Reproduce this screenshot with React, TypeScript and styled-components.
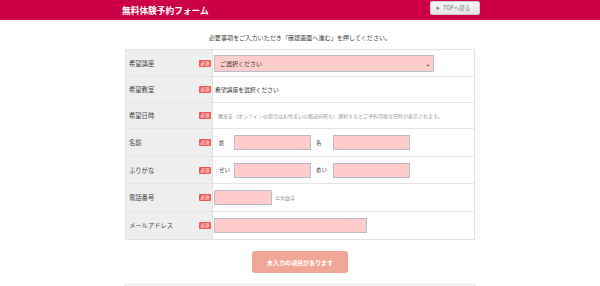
import React from "react";
import styled, { createGlobalStyle } from "styled-components";

const GlobalStyle = createGlobalStyle`
  body {
    margin: 0;
    background: #fff;
    font-family: "Noto Sans CJK JP", "Noto Sans", sans-serif;
    color: #333;
  }
  * {
    box-sizing: border-box;
  }
`;

const Header = styled.header`
  height: 20px;
  background: #cc0047;
`;

const HeaderInner = styled.div`
  width: 360px;
  margin: 0 auto;
  height: 100%;
  display: flex;
  align-items: center;
  justify-content: space-between;
  padding-left: 2px;
`;

const Title = styled.h1`
  margin: 0;
  color: #fff;
  font-size: 8.7px;
  font-weight: 700;
`;

const TopButton = styled.button`
  width: 50px;
  height: 14px;
  margin-top: -4px;
  border: 1px solid #ccc;
  border-radius: 2px;
  background: linear-gradient(#fafafa, #e4e4e4);
  color: #777;
  font-family: inherit;
  font-size: 5.5px;
  padding: 0 0 0 5px;
  display: flex;
  align-items: center;
  gap: 3px;
`;

const Arrow = styled.span`
  font-size: 4px;
  color: #888;
`;

const Main = styled.main`
  width: 350px;
  margin: 0 auto;
`;

const Lead = styled.p`
  margin: 13px 0 7px;
  text-align: center;
  font-size: 6.1px;
  color: #444;
`;

const Table = styled.div`
  border: 1px solid #e2e2e2;
`;

const Row = styled.div<{ $h?: number }>`
  display: grid;
  grid-template-columns: 87px 1fr;
  height: ${(p) => p.$h ?? 26}px;
  border-top: 1px solid #e6e6e6;
  &:first-child {
    border-top: none;
  }
`;

const Label = styled.div`
  background: #eeeeee;
  border-right: 1px solid #e2e2e2;
  display: flex;
  align-items: center;
  justify-content: space-between;
  padding: 0 1px 0 3px;
  font-size: 6.3px;
  color: #444;
`;

const Badge = styled.span`
  background: #f05555;
  color: #fff;
  font-size: 4.5px;
  line-height: 7px;
  padding: 0 1.5px;
  border-radius: 1px;
`;

const Cell = styled.div`
  display: flex;
  align-items: center;
  padding-left: 1px;
  font-size: 6px;
`;

const Field = styled.div<{ $w: number }>`
  width: ${(p) => p.$w}px;
  height: 15px;
  background: #ffcccc;
  border: 1px solid #b9bdca;
`;

const Select = styled(Field)`
  height: 17px;
  display: flex;
  align-items: center;
  justify-content: space-between;
  padding: 0 3px 0 5px;
  font-size: 6px;
  color: #333;
`;

const Caret = styled.span`
  font-size: 5px;
  font-weight: 700;
  color: #111;
`;

const Note = styled.span<{ $pad?: number }>`
  padding-left: ${(p) => p.$pad ?? 0}px;
  font-size: 5px;
  color: #999;
`;

const Pair = styled.div`
  display: flex;
  align-items: center;
`;

const NameLabel = styled.span<{ $w: number }>`
  width: ${(p) => p.$w}px;
  padding-left: 5px;
  font-size: 5.5px;
  color: #444;
`;

const Plain = styled.span`
  padding-left: 1px;
  font-size: 5.8px;
  color: #333;
`;

const Actions = styled.div`
  display: flex;
  justify-content: center;
  padding: 11px 0;
`;

const Submit = styled.button`
  width: 96px;
  height: 22px;
  border: none;
  border-radius: 3px;
  background: #f0a797;
  color: #fff;
  font-family: inherit;
  font-size: 6px;
  font-weight: 700;
`;

const NextBox = styled.div`
  height: 20px;
  border: 1px solid #e2e2e2;
`;

function Req() {
  return <Badge>必須</Badge>;
}

export default function App() {
  return (
    <>
      <GlobalStyle />
      <Header>
        <HeaderInner>
          <Title>無料体験予約フォーム</Title>
          <TopButton>
            <Arrow>▶</Arrow>TOPへ戻る
          </TopButton>
        </HeaderInner>
      </Header>
      <Main>
        <Lead>必要事項をご入力いただき「確認画面へ進む」を押してください。</Lead>
        <Table>
          <Row $h={26}>
            <Label>
              希望講座
              <Req />
            </Label>
            <Cell>
              <Select $w={220}>
                ご選択ください
                <Caret>⌄</Caret>
              </Select>
            </Cell>
          </Row>
          <Row $h={26}>
            <Label>
              希望教室
              <Req />
            </Label>
            <Cell>
              <Plain>希望講座を選択ください</Plain>
            </Cell>
          </Row>
          <Row $h={26}>
            <Label>
              希望日時
              <Req />
            </Label>
            <Cell>
              <Note $pad={4}>
                教室を（オンラインの場合はお住まいの都道府県も）選択するとご予約可能な日時が表示されます。
              </Note>
            </Cell>
          </Row>
          <Row $h={28}>
            <Label>
              名前
              <Req />
            </Label>
            <Cell>
              <Pair>
                <NameLabel $w={20}>姓</NameLabel>
                <Field $w={77} />
              </Pair>
              <Pair>
                <NameLabel $w={22}>名</NameLabel>
                <Field $w={77} />
              </Pair>
            </Cell>
          </Row>
          <Row $h={27}>
            <Label>
              ふりがな
              <Req />
            </Label>
            <Cell>
              <Pair>
                <NameLabel $w={20}>せい</NameLabel>
                <Field $w={77} />
              </Pair>
              <Pair>
                <NameLabel $w={22}>めい</NameLabel>
                <Field $w={77} />
              </Pair>
            </Cell>
          </Row>
          <Row $h={28}>
            <Label>
              電話番号
              <Req />
            </Label>
            <Cell>
              <Field $w={58} />
              <Note $pad={3}>半角数字</Note>
            </Cell>
          </Row>
          <Row $h={28}>
            <Label>
              メールアドレス
              <Req />
            </Label>
            <Cell>
              <Field $w={153} />
            </Cell>
          </Row>
        </Table>
        <Actions>
          <Submit>未入力の項目があります</Submit>
        </Actions>
        <NextBox />
      </Main>
    </>
  );
}
